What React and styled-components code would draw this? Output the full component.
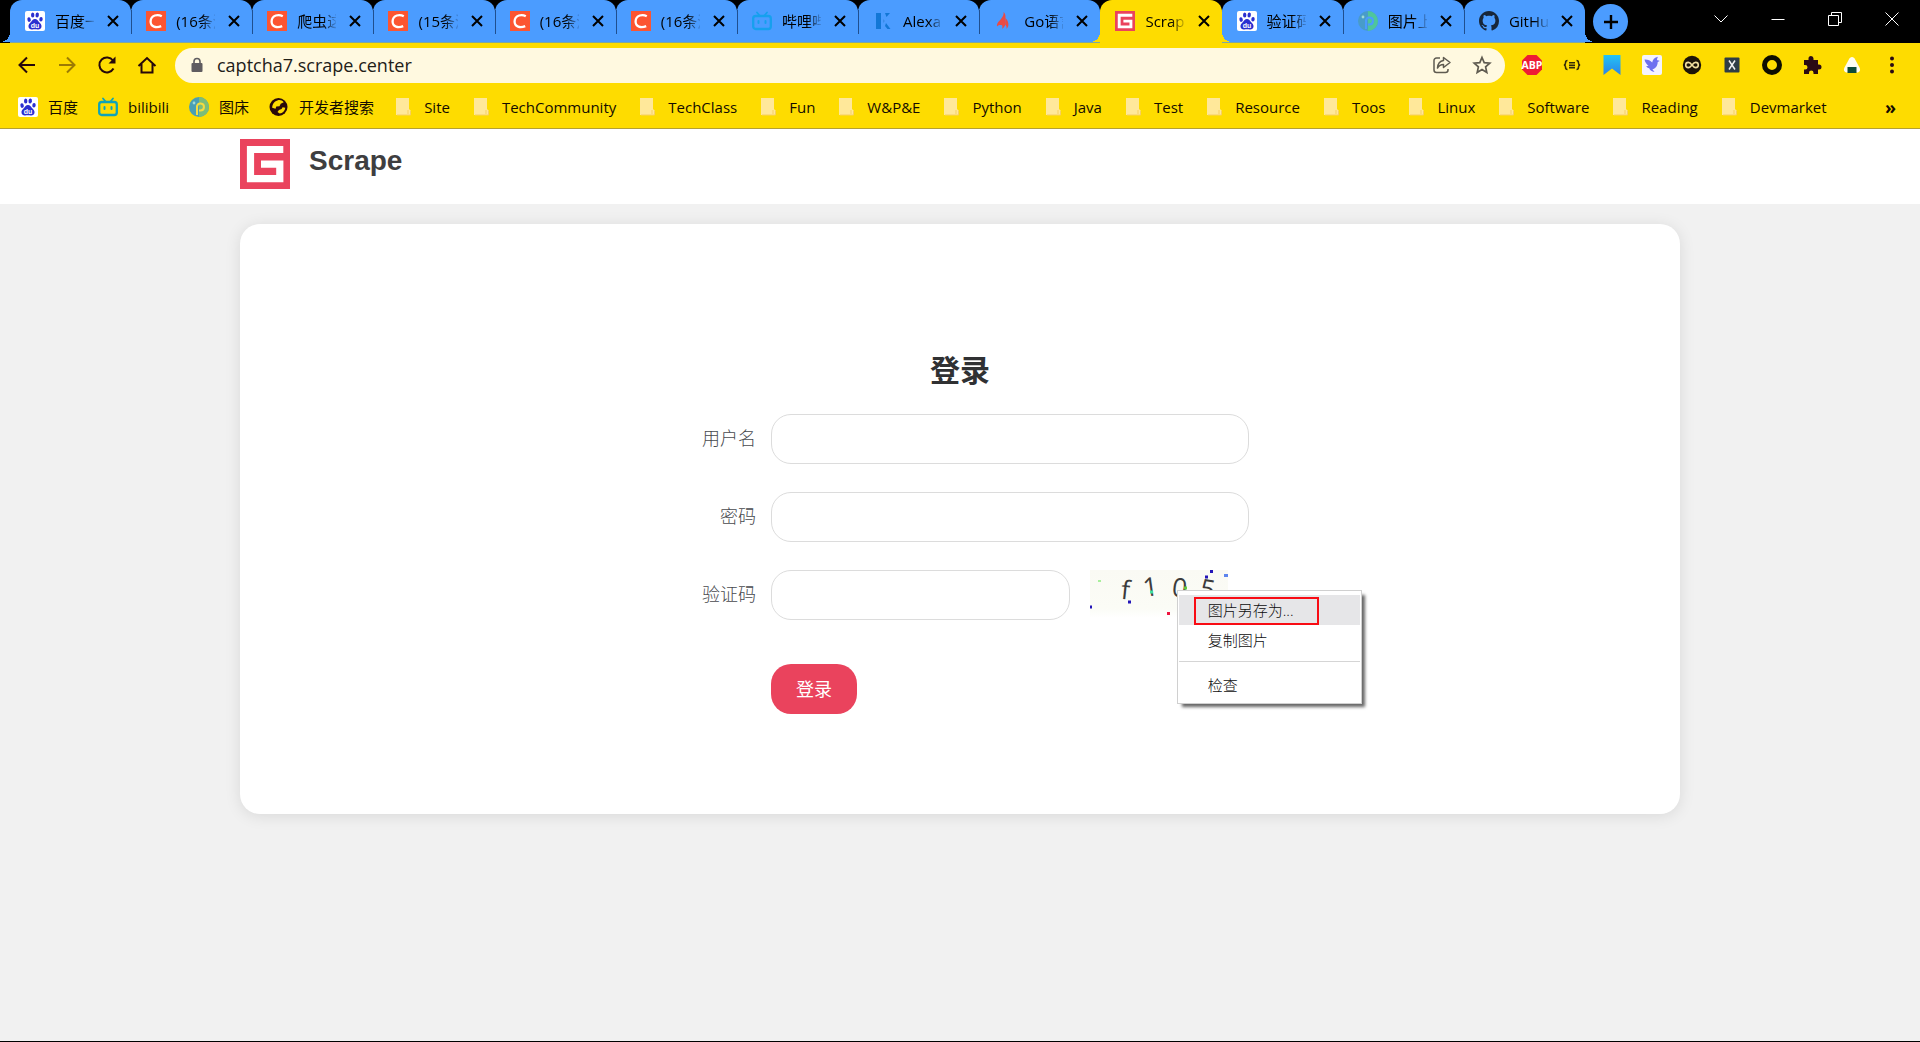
import React from "react";
import styled, { createGlobalStyle, css } from "styled-components";

const uiFont = `"Open Sans", "Noto Sans CJK SC", sans-serif`;
const pageFont = `"Liberation Sans", "Noto Sans CJK SC", sans-serif`;

const GlobalStyle = createGlobalStyle`
  *, *::before, *::after { box-sizing: border-box; }
  body { margin: 0; background: #f1f1f1; font-family: ${pageFont}; }
  button { border: 0; padding: 0; background: none; color: inherit; font: inherit; cursor: pointer; }
  svg { display: block; flex: none; }
`;

const Screen = styled.div`
  display: flex;
  flex-direction: column;
  min-height: 100vh;
  border-bottom: 1px solid #000;
`;

/* ---------- browser chrome ---------- */

const Chrome = styled.div`
  font-family: ${uiFont};
  color: #140c00;
`;

const TabStrip = styled.div`
  display: flex;
  height: 43px;
  padding-left: 10px;
  background: #000;
`;

const Tabs = styled.div`
  display: flex;
  flex: 0 1 1575px;
  min-width: 0;
`;

const flare = (color, side) => css`
  content: "";
  position: absolute;
  bottom: 0;
  ${side}: -10px;
  width: 10px;
  height: 10px;
  background: radial-gradient(circle at ${side} top, transparent 10px, ${color} 10px);
`;

const Tab = styled.div`
  position: relative;
  z-index: ${(p) => (p.$active ? 1 : 0)};
  display: flex;
  flex: 1 1 0;
  align-items: center;
  gap: 10px;
  min-width: 0;
  padding: 0 9px 0 15px;
  border-radius: 12px 12px 0 0;
  background: ${(p) => (p.$active ? "#fedc00" : "#4b9cff")};
  border-bottom: 1px solid ${(p) => (p.$active ? "#fedc00" : "#7fa8a0")};
  &::before { ${(p) => (p.$active || p.$first) && flare(p.$active ? "#fedc00" : "#4b9cff", "left")} }
  &::after { ${(p) => (p.$active || p.$last) && flare(p.$active ? "#fedc00" : "#4b9cff", "right")} }
`;

const TabDivider = styled.span`
  position: absolute;
  left: 0;
  top: 10px;
  width: 1px;
  height: 24px;
  background: #1f4f8f;
`;

const TabTitle = styled.span`
  flex: 1;
  min-width: 0;
  overflow: hidden;
  white-space: nowrap;
  font-size: 15px;
  line-height: 24px;
  color: #000;
  mask-image: linear-gradient(to right, #000 65%, transparent 105%);
`;

const TabClose = styled.button`
  display: grid;
  place-items: center;
  width: 18px;
  height: 18px;
`;

const NewTab = styled.button`
  display: grid;
  place-items: center;
  width: 35px;
  height: 35px;
  margin: 4px 0 0 8px;
  border-radius: 50%;
  background: #4b9cff;
`;

const WindowControls = styled.div`
  display: flex;
  margin-left: auto;
`;

const WindowButton = styled.button`
  display: grid;
  place-items: center;
  width: 57px;
  height: 37px;
`;

const Toolbar = styled.div`
  display: flex;
  align-items: center;
  height: 44px;
  padding: 0 8px 0 7px;
  background: #fedc00;
`;

const ToolButton = styled.button`
  display: grid;
  place-items: center;
  width: 40px;
  height: 36px;
`;

const AddressBar = styled.div`
  display: flex;
  flex: 1;
  align-items: center;
  height: 35px;
  margin: 0 7px 0 8px;
  padding: 0 3px 0 15px;
  border-radius: 18px;
  background: #fff9e0;
`;

const AddressInput = styled.input`
  flex: 1;
  min-width: 0;
  margin-left: 13px;
  padding: 0;
  border: 0;
  outline: 0;
  background: transparent;
  color: #222018;
  font: 18px/28px ${uiFont};
`;

const Bookmarks = styled.nav`
  display: flex;
  align-items: center;
  height: 42px;
  padding: 0 24px 2px 18px;
  background: #fedc00;
  border-bottom: 1px solid #b3a034;
`;

const BookmarkGroup = styled.div`
  display: flex;
  gap: ${(p) => p.$gap}px;
  margin-right: 20px;
`;

const Bookmark = styled.a`
  display: flex;
  align-items: center;
  gap: 10px;
  color: #140c00;
  font-size: 15px;
  line-height: 24px;
  text-decoration: none;
  white-space: nowrap;
`;

const MoreBookmarks = styled.button`
  margin-left: auto;
  font-size: 18px;
  font-weight: 700;
  line-height: 24px;
`;

/* ---------- page ---------- */

const PageHeader = styled.header`
  display: flex;
  gap: 19px;
  height: 75px;
  padding: 10px 12.5% 0;
  background: #fff;
`;

const SiteName = styled.a`
  color: #3e3e40;
  font-size: 28px;
  font-weight: 700;
  line-height: 44px;
  text-decoration: none;
`;

const Main = styled.main`
  flex: 1;
  padding: 20px 12.5%;
  background: #f1f1f1;
`;

const Card = styled.section`
  padding: 128px 20px 100px;
  border-radius: 20px;
  background: #fff;
  box-shadow: 0 2px 16px rgba(0, 0, 0, 0.1);
`;

const Title = styled.h1`
  margin: 0 0 24px;
  color: #303133;
  font-size: 30px;
  font-weight: 700;
  line-height: 38px;
  text-align: center;
`;

const Form = styled.form`
  display: grid;
  gap: 28px;
  width: 578px;
  max-width: 100%;
  margin: 0 auto;
`;

const Field = styled.div`
  display: grid;
  grid-template-columns: 85px minmax(0, 1fr);
  column-gap: 15px;
  align-items: center;
`;

const Label = styled.label`
  color: #484a4e;
  font-size: 18px;
  font-weight: 300;
  line-height: 26px;
  text-align: right;
`;

const TextInput = styled.input`
  width: 100%;
  height: 50px;
  padding: 0 16px;
  border: 1px solid #dcdcdc;
  border-radius: 20px;
  outline: 0;
  background: #fff;
  font: 16px/24px ${pageFont};
`;

const CaptchaRow = styled.div`
  display: grid;
  grid-template-columns: 5fr 3fr;
  align-items: start;
`;

const CaptchaBox = styled.div`
  position: relative;
  margin-left: 20px;
`;

const Submit = styled.button`
  grid-column: 2;
  justify-self: start;
  height: 50px;
  margin-top: 16px;
  padding: 0 25px 2px;
  border-radius: 20px;
  background: #ea435d;
  color: #fff;
  font-size: 18px;
`;

const ContextMenu = styled.div`
  position: absolute;
  left: 87px;
  top: 20px;
  width: 185px;
  padding: 4px 1px 3px;
  border: 1px solid #d0d0d0;
  background: #fff;
  box-shadow: 4px 4px 3px -1px rgba(0, 0, 0, 0.6);
  font-family: ${uiFont};
`;

const MenuItem = styled.button`
  position: relative;
  display: block;
  width: 100%;
  height: 30px;
  padding-left: 29px;
  background: ${(p) => (p.$hover ? "#e6e6e8" : "transparent")};
  color: #0c0c0c;
  font-size: 15px;
  font-weight: 300;
  line-height: 30px;
  text-align: left;
`;

const MenuDivider = styled.hr`
  height: 1px;
  margin: 6px 0 8px;
  border: 0;
  background: #d5d5d5;
`;

const Highlight = styled.span`
  position: absolute;
  left: 15px;
  top: 2px;
  width: 125px;
  height: 28px;
  border: 2px solid #f80c14;
`;

/* ---------- drawings ---------- */

const Svg = ({ s = 20, vb = "0 0 20 20", children, ...rest }) => (
  <svg width={s} height={s} viewBox={vb} fill="none" aria-hidden="true" {...rest}>{children}</svg>
);

const BaiduIcon = () => (
  <Svg>
    <rect width="20" height="20" rx="2" fill="#fff" />
    <g fill="#2b2fd0">
      <ellipse cx="4.1" cy="8.6" rx="1.7" ry="2.3" transform="rotate(-12 4.1 8.6)" />
      <ellipse cx="7.7" cy="4" rx="1.7" ry="2.5" />
      <ellipse cx="12.2" cy="4" rx="1.7" ry="2.5" transform="rotate(8 12.2 4)" />
      <ellipse cx="16" cy="8.3" rx="1.7" ry="2.3" transform="rotate(8 16 8.3)" />
      <path d="M10 8c2.100 0 2.900 1.800 4 3.100 1.300 1.500 2.800 2.500 2.500 4.700-.3 2-1.900 2.900-3.700 2.700-1.100-.1-1.800-.3-2.800-.3s-1.700.2-2.800.3c-1.800.2-3.400-.7-3.700-2.700-.3-2.200 1.200-3.200 2.500-4.700C7.100 9.800 7.900 8 10 8z" />
    </g>
    <text x="10" y="16.800" fontSize="7" fontWeight="700" fontFamily="Liberation Sans, sans-serif" textAnchor="middle" fill="#fff">du</text>
  </Svg>
);

const CsdnIcon = () => (
  <Svg>
    <rect width="20" height="20" fill="#fc5531" />
    <path d="M15.800 5.200C11.800 3 4.900 3.800 4.600 10.300c-.2 5.700 5.700 7 10.600 4.800" stroke="#fff" strokeWidth="2.300" />
  </Svg>
);

const TvIcon = ({ color = "#0fa3b8" }) => (
  <Svg stroke={color} strokeLinecap="round">
    <rect x="1.200" y="5" width="17.600" height="13" rx="2.500" strokeWidth="2.300" />
    <path d="M5 1.500l2.500 3M15 1.500l-2.500 3" strokeWidth="1.800" />
    <path d="M6.500 10v2M13.500 10v2" strokeWidth="2" />
  </Svg>
);

const KIcon = () => (
  <Svg>
    <path d="M3 2h5v16H3z" fill="#1277d6" />
    <path d="M12 2h5l-3.500 4zM13 12l4.500 6h-3L12 15z" fill="#1277d6" />
    <path d="M10 8l2 2-2 2z" fill="#3b8ce8" />
  </Svg>
);

const FlameIcon = () => (
  <Svg>
    <path d="M9.500 1c.8 2.500-1 5-2.700 7.200C5.200 10.200 2.500 12 3 15.500c1.300-1.300 2.900-1.700 4.300-1.500 1.600.3 1.300 2.400.7 4 2.600-1.800 4-4.600 3.500-7.500C11.200 7.500 12.500 3.500 9.500 1z" fill="#e94b45" />
    <path d="M11.500 7c1.800 2 3.200 4.500 2.900 7-.1 1.300-.8 2.700-1.900 3.700.4-2-.3-3-1.300-4.200z" fill="#e94b45" />
  </Svg>
);

const ScrapeIcon = ({ s = 20 }) => (
  <Svg s={s} vb="0 0 50 50">
    <rect width="50" height="50" fill="#ea435d" />
    <path d="M43.300 10.500H10.500v29.200h29.300V25.200H21" stroke="#fff" strokeWidth="7.200" />
  </Svg>
);

const PicIcon = ({ green }) => (
  <Svg>
    <circle cx="10" cy="10" r="10" fill={green ? "#489cc9" : "#4a9fb4"} />
    <path d="M10 0a10 10 0 010 20z" fill={green ? "#4fc59b" : "#7dbd78"} />
    <path d="M8 18V8.500M8 9.500a3.500 3.500 0 113.500 4H10" stroke={green ? "#4b9cff" : "#f5dc40"} strokeWidth="2" />
    <circle cx="5" cy="6" r="1.400" fill="#9ed9d5" />
  </Svg>
);

const GithubIcon = () => (
  <Svg vb="0 0 16 16">
    <path fill="#17263a" d="M8 0C3.580 0 0 3.580 0 8c0 3.540 2.290 6.530 5.470 7.590.4.070.55-.17.55-.38 0-.19-.01-.82-.01-1.490-2.010.37-2.530-.49-2.690-.94-.09-.23-.48-.94-.82-1.130-.28-.15-.68-.52-.01-.53.63-.01 1.080.58 1.230.82.72 1.210 1.870.87 2.330.66.070-.52.28-.87.51-1.070-1.780-.2-3.640-.89-3.640-3.950 0-.87.31-1.590.82-2.150-.08-.2-.36-1.020.08-2.120 0 0 .67-.21 2.200.82.64-.18 1.320-.27 2-.27s1.360.09 2 .27c1.530-1.040 2.200-.82 2.200-.82.44 1.100.16 1.920.08 2.120.51.56.82 1.270.82 2.150 0 3.070-1.870 3.750-3.650 3.950.29.25.54.73.54 1.480 0 1.070-.01 1.930-.01 2.200 0 .21.15.46.55.38A8.010 8.010 0 0016 8c0-4.420-3.580-8-8-8z" />
  </Svg>
);

const GlobeIcon = () => (
  <Svg>
    <circle cx="9.500" cy="10" r="9" fill="#2a0a0a" />
    <path d="M9 3.200c2.500-.4 4.500.5 5.700 2l-3 1.600-1.200 2.400-3.200.3-.8 2.200-3.300-1C3.200 7 5.500 4 9 3.200zM10 13l2.600-1 1-1.800 2.700.6c-.4 3.200-2.700 5.400-5.600 5.800L8.500 15z" fill="#fedc00" />
  </Svg>
);

const FolderIcon = () => (
  <Svg>
    <path d="M2 1h13v11l2 2v4H2z" fill="#ffe89a" />
    <path d="M14 13v4M16.500 14v4H3" stroke="#f6cf62" />
  </Svg>
);

const CloseIcon = () => <Svg s={12} vb="0 0 12 12"><path d="M1 1l10 10M11 1L1 11" stroke="#000" strokeWidth="2" /></Svg>;

const dark = { stroke: "#26080a", strokeWidth: 2 };
const BackIcon = () => <Svg {...dark}><path d="M18 10H3M10 2.500L2.500 10l7.500 7.500" /></Svg>;
const ForwardIcon = () => <Svg {...dark} opacity="0.450"><path d="M2 10h15M10 2.500l7.500 7.500-7.500 7.500" /></Svg>;
const ReloadIcon = () => <Svg {...dark}><path d="M16.500 13.500A7.500 7.500 0 1116 5.500" /><path d="M18.500 1.500v7h-7z" fill="#26080a" stroke="none" /></Svg>;
const HomeIcon = () => <Svg {...dark}><path d="M1.500 11L10 3l8.500 8M4.500 9v8.500h11V9" /></Svg>;
const LockIcon = () => (
  <Svg s={14} vb="0 0 14 16" height="16"><rect x="1.500" y="6" width="11" height="9" rx="1" fill="#5f5c60" /><path d="M4 6V4.500a3 3 0 016 0V6" stroke="#5f5c60" strokeWidth="1.600" /></Svg>
);
const ShareIcon = () => (
  <Svg stroke="#5f5b50" strokeWidth="1.500" strokeLinejoin="round">
    <path d="M8 3H4.500A2.500 2.500 0 002 5.500v9.500A2.500 2.500 0 004.500 17.500h9a2.500 2.500 0 002.500-2.500v-1" />
    <path d="M11.500 2.500l6.500 5-6.500 5V9.500c-3 0-4.500 1-6 3.500.3-4 2-7 6-7.500z" />
  </Svg>
);
const StarIcon = () => <Svg stroke="#5f5b50" strokeWidth="1.700"><path d="M10 2.500l2.200 5.200 5.600.5-4.200 3.700 1.200 5.500L10 14.500l-4.800 2.900 1.200-5.500-4.200-3.700 5.600-.5z" /></Svg>;

const AbpIcon = () => (
  <Svg s={22} vb="0 0 22 22">
    <path d="M6.500 1h9L21 6.500v9L15.500 21h-9L1 15.500v-9z" fill="#ee1b35" />
    <text x="11" y="14.800" fontSize="10.500" fontWeight="700" fontFamily="Open Sans, sans-serif" textAnchor="middle" fill="#fff">ABP</text>
  </Svg>
);
const BracesIcon = () => (
  <Svg stroke="#332b08" strokeWidth="1.600">
    <path d="M5.500 5.500c-1.800 0-1.900.5-1.900 2 0 1.700-.3 2.200-1.600 2.500 1.300.3 1.600.8 1.600 2.500 0 1.500.1 2 1.900 2M14.500 5.500c1.800 0 1.900.5 1.900 2 0 1.700.3 2.200 1.600 2.500-1.300.3-1.600.8-1.600 2.500 0 1.500-.1 2-1.900 2M7 7.800h6M7 10.200h6M7 12.600h6" />
  </Svg>
);
const RibbonIcon = () => (
  <Svg>
    <defs><linearGradient id="ribbon" x1="0" y1="0" x2="0" y2="1"><stop stopColor="#23c4f5" /><stop offset="1" stopColor="#2b83e8" /></linearGradient></defs>
    <path d="M1.500 0h17v20L10 13.500 1.500 20z" fill="url(#ribbon)" />
  </Svg>
);
const BirdIcon = () => (
  <Svg>
    <rect width="20" height="20" rx="2" fill="#f4f3ff" />
    <path d="M2.500 4.500c3.200-.2 5.800.9 7.700 2.900C10.700 4.800 12.500 2.500 16 1.800c-.8 1.300-1 2.400-.9 3.500.9-.2 1.900 0 2.600.7l-2 1.100c-.1 4.200-2.400 6.700-5.300 7.200L12.500 17c-2.600-.2-4.600-1.500-5.300-3.700-1.500-.3-2.500-1.100-3-2.200l2.300-.2C4.400 9.300 3.100 7.200 2.500 4.500z" fill="#6e70f0" />
  </Svg>
);
const InfinityIcon = () => (
  <Svg><circle cx="10" cy="10" r="9.200" fill="#1c1408" /><path d="M10 10c-1.500-2-2.500-2.600-3.700-2.600a2.600 2.600 0 000 5.200C7.500 12.600 8.500 12 10 10s2.500-2.600 3.700-2.600a2.600 2.600 0 010 5.200C12.500 12.600 11.500 12 10 10z" stroke="#f2dfa0" strokeWidth="1.600" /></Svg>
);
const XIcon = () => (
  <Svg><rect x="2.500" y="2.500" width="15" height="15" rx="1" fill="#2e3d46" /><path d="M7 5.500l6 9M13 5.500l-6 9" stroke="#f2f2f2" strokeWidth="1.500" /></Svg>
);
const RingIcon = () => <Svg><circle cx="10" cy="10" r="7.500" stroke="#0d0d00" strokeWidth="5" /></Svg>;
const PuzzleIcon = () => (
  <Svg><path d="M2 5h4.500V3.500a2.500 2.500 0 015 0V5H16v4.500h1a2.500 2.500 0 010 5h-1V19h-4.500v-1.200a2.200 2.200 0 00-4.500 0V19H2v-4.500h1.200a2.300 2.300 0 000-4.600H2z" fill="#2a0a14" /></Svg>
);
const RiceIcon = () => (
  <Svg><path d="M10 2c1.500 0 2.300 1 3 2.200l4.500 8.300c1.300 2.500.2 5-2.500 5H5c-2.700 0-3.800-2.500-2.500-5L7 4.200C7.700 3 8.500 2 10 2z" fill="#fffdf2" /><path d="M5.500 12h9v6h-9z" fill="#0e4a38" /></Svg>
);
const DotsIcon = () => <Svg><g fill="#2a0a14"><circle cx="10" cy="3.500" r="2" /><circle cx="10" cy="10" r="2" /><circle cx="10" cy="16.500" r="2" /></g></Svg>;

const WinSvg = ({ children }) => <Svg s={14} vb="0 0 14 14" stroke="#fff">{children}</Svg>;

const CaptchaImage = () => (
  <svg width="144" height="48" viewBox="0 0 144 48" role="img" aria-label="f105">
    <defs>
      <linearGradient id="paper" x1="0" y1="0" x2="0" y2="1">
        <stop stopColor="#fafaf4" /><stop offset="0.8" stopColor="#fbfcf6" /><stop offset="1" stopColor="#fff" />
      </linearGradient>
    </defs>
    <rect width="138" height="48" fill="url(#paper)" />
    <g fill="#3c3c3c" fontFamily="Open Sans, sans-serif" fontSize="26">
      <text x="31" y="29" transform="rotate(6 34 22)">f</text>
      <text x="53" y="26" transform="rotate(-8 60 18)">1</text>
      <text x="82" y="27" transform="rotate(8 90 20)">0</text>
      <text x="110" y="28" transform="rotate(10 117 20)">5</text>
    </g>
    <path d="M8 11h3" stroke="#a9f09c" strokeWidth="2" />
    <path d="M0 37h2M38 32h3M115 7h3M120 1.500h3" stroke="#2315b8" strokeWidth="3" />
    <path d="M134 5.500h4" stroke="#5d84ee" strokeWidth="3" />
    <path d="M77 43.500h3" stroke="#ee1440" strokeWidth="3" />
    <path d="M60 22h3" stroke="#3fe0a0" strokeWidth="3" />
    <path d="M94 18h3" stroke="#62c83c" strokeWidth="3" />
  </svg>
);

/* ---------- data ---------- */

const tabs = [
  { title: "百度一下", icon: <BaiduIcon /> },
  { title: "(16条消息)", icon: <CsdnIcon /> },
  { title: "爬虫这", icon: <CsdnIcon /> },
  { title: "(15条消息)", icon: <CsdnIcon /> },
  { title: "(16条消息)", icon: <CsdnIcon /> },
  { title: "(16条消息)", icon: <CsdnIcon /> },
  { title: "哔哩哔哩", icon: <TvIcon color="#16a0ee" /> },
  { title: "Alexa", icon: <KIcon /> },
  { title: "Go语言", icon: <FlameIcon /> },
  { title: "Scrape", icon: <ScrapeIcon />, active: true },
  { title: "验证码", icon: <BaiduIcon /> },
  { title: "图片上", icon: <PicIcon green /> },
  { title: "GitHub", icon: <GithubIcon /> },
];

const sites = [
  ["百度", <BaiduIcon />],
  ["bilibili", <TvIcon />],
  ["图床", <PicIcon />],
  ["开发者搜索", <GlobeIcon />],
];

const folders = ["Site", "TechCommunity", "TechClass", "Fun", "W&P&E", "Python", "Java", "Test", "Resource", "Toos", "Linux", "Software", "Reading", "Devmarket"];

const extensions = [
  ["Adblock Plus", AbpIcon], ["JSON", BracesIcon], ["Bookmark", RibbonIcon], ["Bird", BirdIcon], ["Infinity", InfinityIcon],
  ["XPath", XIcon], ["Ring", RingIcon], ["Extensions", PuzzleIcon], ["Profile", RiceIcon], ["Menu", DotsIcon],
];

const BrowserChrome = () => (
  <Chrome>
    <TabStrip>
      <Tabs role="tablist">
        {tabs.map((t, i) => (
          <Tab key={i} role="tab" aria-selected={!!t.active} $active={t.active} $first={i === 0} $last={i === tabs.length - 1}>
            {i > 0 && !t.active && !tabs[i - 1].active && <TabDivider />}
            {t.icon}
            <TabTitle>{t.title}</TabTitle>
            <TabClose aria-label="Close tab"><CloseIcon /></TabClose>
          </Tab>
        ))}
      </Tabs>
      <NewTab aria-label="New tab"><Svg s={16} vb="0 0 16 16"><path d="M8 1v14M1 8h14" stroke="#000" strokeWidth="2.400" /></Svg></NewTab>
      <WindowControls>
        <WindowButton aria-label="Search tabs"><WinSvg><path d="M.5 3.500L7 10l6.500-6.500" /></WinSvg></WindowButton>
        <WindowButton aria-label="Minimize"><WinSvg><path d="M.5 7.500h13" /></WinSvg></WindowButton>
        <WindowButton aria-label="Restore"><WinSvg><path d="M.5 3.500h10v10H.5zM3.500 3V.5h10v10H11" /></WinSvg></WindowButton>
        <WindowButton aria-label="Close"><WinSvg><path d="M.5.5l13 13M13.500.5l-13 13" /></WinSvg></WindowButton>
      </WindowControls>
    </TabStrip>
    <Toolbar>
      <ToolButton aria-label="Back"><BackIcon /></ToolButton>
      <ToolButton aria-label="Forward"><ForwardIcon /></ToolButton>
      <ToolButton aria-label="Reload"><ReloadIcon /></ToolButton>
      <ToolButton aria-label="Home"><HomeIcon /></ToolButton>
      <AddressBar>
        <LockIcon />
        <AddressInput aria-label="Address" defaultValue="captcha7.scrape.center" />
        <ToolButton aria-label="Share"><ShareIcon /></ToolButton>
        <ToolButton aria-label="Favorite"><StarIcon /></ToolButton>
      </AddressBar>
      {extensions.map(([name, Icon]) => (
        <ToolButton key={name} aria-label={name}><Icon /></ToolButton>
      ))}
    </Toolbar>
    <Bookmarks>
      <BookmarkGroup $gap={20}>
        {sites.map(([name, icon]) => <Bookmark key={name} href="#">{icon}{name}</Bookmark>)}
      </BookmarkGroup>
      <BookmarkGroup $gap={22}>
        {folders.map((name) => <Bookmark key={name} href="#"><FolderIcon />{name}</Bookmark>)}
      </BookmarkGroup>
      <MoreBookmarks>»</MoreBookmarks>
    </Bookmarks>
  </Chrome>
);

export default function App() {
  return (
    <Screen>
      <GlobalStyle />
      <BrowserChrome />
      <PageHeader>
        <ScrapeIcon s={50} />
        <SiteName href="#">Scrape</SiteName>
      </PageHeader>
      <Main>
        <Card>
          <Title>登录</Title>
          <Form onSubmit={(e) => e.preventDefault()}>
            <Field>
              <Label htmlFor="username">用户名</Label>
              <TextInput id="username" />
            </Field>
            <Field>
              <Label htmlFor="password">密码</Label>
              <TextInput id="password" type="password" />
            </Field>
            <Field>
              <Label htmlFor="captcha">验证码</Label>
              <CaptchaRow>
                <TextInput id="captcha" />
                <CaptchaBox>
                  <CaptchaImage />
                  <ContextMenu role="menu">
                    <MenuItem type="button" role="menuitem" $hover>图片另存为...<Highlight /></MenuItem>
                    <MenuItem type="button" role="menuitem">复制图片</MenuItem>
                    <MenuDivider />
                    <MenuItem type="button" role="menuitem">检查</MenuItem>
                  </ContextMenu>
                </CaptchaBox>
              </CaptchaRow>
            </Field>
            <Field>
              <Submit type="submit">登录</Submit>
            </Field>
          </Form>
        </Card>
      </Main>
    </Screen>
  );
}
